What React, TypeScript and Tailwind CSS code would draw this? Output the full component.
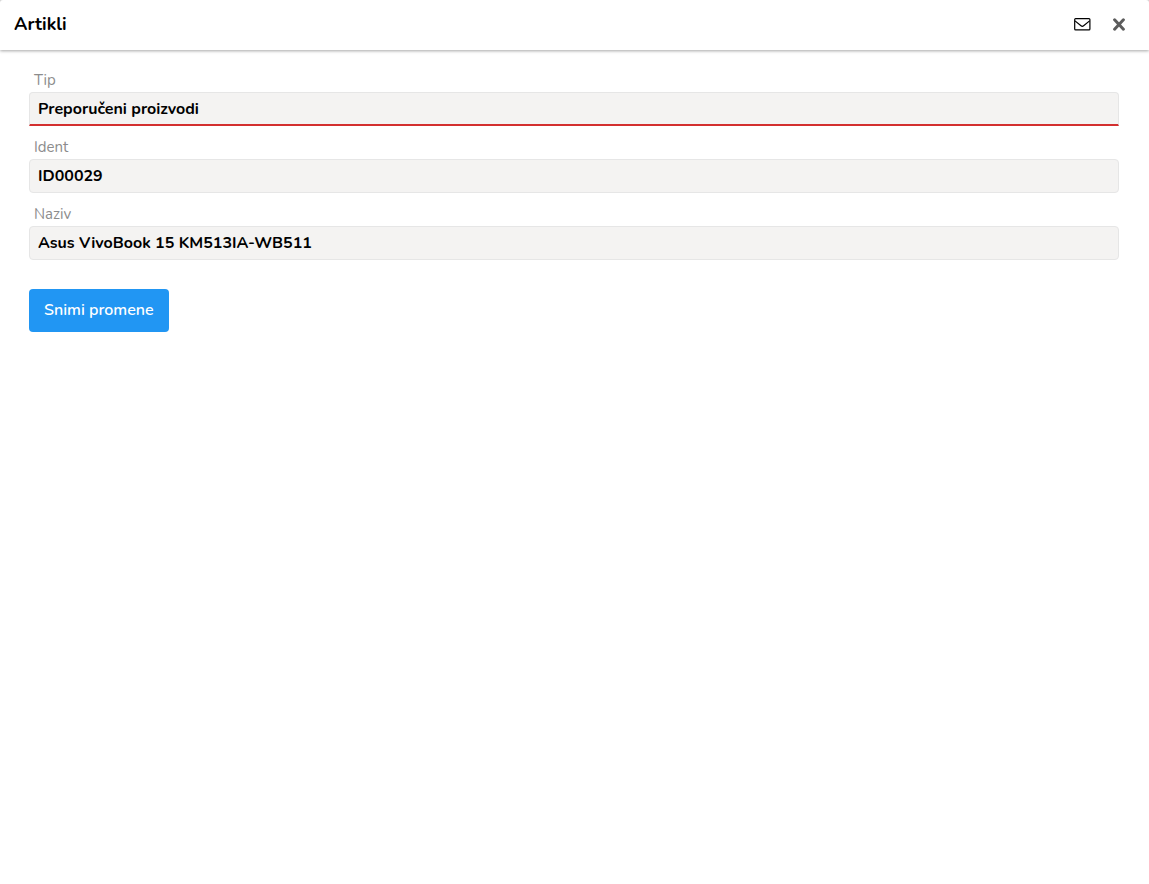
import React from "react";

type FieldProps = { id: string; label: string; value: string; invalid?: boolean };

function Field({ id, label, value, invalid = false }: FieldProps) {
  return (
    <div className="flex flex-col">
      <label htmlFor={id} className="px-[5px] text-[15px] leading-6 text-[#8c8c8c]">
        {label}
      </label>
      <input
        id={id}
        type="text"
        defaultValue={value}
        aria-invalid={invalid}
        className={
          "h-[34px] w-full border bg-[#f4f3f2] px-2 text-base font-bold text-black outline-none " +
          (invalid
            ? "rounded-t border-[#e6e6e6] border-b-2 border-b-[#d32f2f]"
            : "rounded border-[#e6e6e6]")
        }
      />
    </div>
  );
}

function EnvelopeIcon() {
  return (
    <svg viewBox="0 0 17 13" className="h-[13px] w-[17px]" fill="none" stroke="currentColor" strokeWidth="1.2" aria-hidden="true">
      <rect x="0.7" y="0.6" width="15.2" height="11.2" rx="0.9" />
      <path d="M1 2.9 L7 7.8 Q8.3 8.9 9.6 7.8 L15.6 2.9" />
    </svg>
  );
}

function CloseIcon() {
  return (
    <svg viewBox="0 0 12 13" className="h-[13px] w-3" fill="none" stroke="currentColor" strokeWidth="3" strokeLinecap="round" aria-hidden="true">
      <path d="M1.6 1.8 L10.4 11.2 M10.4 1.8 L1.6 11.2" />
    </svg>
  );
}

export default function App() {
  return (
    <div className="bg-neutral-300 font-['Nunito','Lato',sans-serif] text-black">
      <div className="min-h-screen rounded-t-[3px] bg-white">
        <header className="flex h-[50px] items-center justify-between pb-0.5 pl-3.5 pr-6 shadow-[0_1px_3px_rgba(0,0,0,0.35)]">
          <h1 className="text-lg font-bold">Artikli</h1>
          <div className="flex items-center gap-[22px]">
            <button type="button" aria-label="E-mail">
              <EnvelopeIcon />
            </button>
            <button type="button" aria-label="Zatvori" className="text-[#5c5c5c]">
              <CloseIcon />
            </button>
          </div>
        </header>
        <form className="pl-[29px] pr-[30px] pt-[18px]" onSubmit={(e) => e.preventDefault()}>
          <div className="flex flex-col gap-[9px]">
            <Field id="tip" label="Tip" value="Preporučeni proizvodi" invalid />
            <Field id="ident" label="Ident" value="ID00029" />
            <Field id="naziv" label="Naziv" value="Asus VivoBook 15 KM513IA-WB511" />
          </div>
          <button
            type="submit"
            className="mt-[29px] h-[43px] rounded bg-[#2196f3] px-[15px] pb-px text-base font-semibold text-white"
          >
            Snimi promene
          </button>
        </form>
      </div>
    </div>
  );
}
